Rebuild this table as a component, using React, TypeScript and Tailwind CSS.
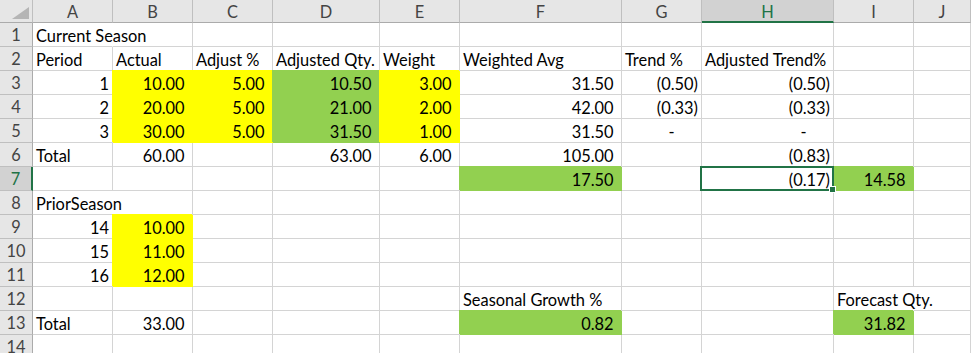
import React from "react";

type Fill = "y" | "g";
type Cell = {
  t?: string; // left-aligned text
  i?: string; // general-format integer, right aligned
  n?: string; // accounting-format number, right aligned
  dash?: boolean; // accounting zero
  fill?: Fill;
  spill?: boolean; // text runs into the empty neighbour
  sel?: boolean;
};

const COL_W = [
  "w-[80px]",
  "w-[80px]",
  "w-[80px]",
  "w-[107px]",
  "w-[80px]",
  "w-[162px]",
  "w-[80px]",
  "w-[132px]",
  "w-[80px]",
  "flex-1",
];

const LETTERS = ["A", "B", "C", "D", "E", "F", "G", "H", "I", "J"];

const E: Cell = {};

const ROWS: Cell[][] = [
  [{ t: "Current Season", spill: true }, E, E, E, E, E, E, E, E, E],
  [
    { t: "Period" },
    { t: "Actual" },
    { t: "Adjust %" },
    { t: "Adjusted Qty." },
    { t: "Weight" },
    { t: "Weighted Avg" },
    { t: "Trend %" },
    { t: "Adjusted Trend%" },
    E,
    E,
  ],
  [
    { i: "1" },
    { n: "10.00", fill: "y" },
    { n: "5.00", fill: "y" },
    { n: "10.50", fill: "g" },
    { n: "3.00", fill: "y" },
    { n: "31.50" },
    { n: "(0.50)" },
    { n: "(0.50)" },
    E,
    E,
  ],
  [
    { i: "2" },
    { n: "20.00", fill: "y" },
    { n: "5.00", fill: "y" },
    { n: "21.00", fill: "g" },
    { n: "2.00", fill: "y" },
    { n: "42.00" },
    { n: "(0.33)" },
    { n: "(0.33)" },
    E,
    E,
  ],
  [
    { i: "3" },
    { n: "30.00", fill: "y" },
    { n: "5.00", fill: "y" },
    { n: "31.50", fill: "g" },
    { n: "1.00", fill: "y" },
    { n: "31.50" },
    { dash: true },
    { dash: true },
    E,
    E,
  ],
  [
    { t: "Total" },
    { n: "60.00" },
    E,
    { n: "63.00" },
    { n: "6.00" },
    { n: "105.00" },
    E,
    { n: "(0.83)" },
    E,
    E,
  ],
  [
    E,
    E,
    E,
    E,
    E,
    { n: "17.50", fill: "g" },
    E,
    { n: "(0.17)", sel: true },
    { n: "14.58", fill: "g" },
    E,
  ],
  [{ t: "PriorSeason", spill: true }, E, E, E, E, E, E, E, E, E],
  [{ i: "14" }, { n: "10.00", fill: "y" }, E, E, E, E, E, E, E, E],
  [{ i: "15" }, { n: "11.00", fill: "y" }, E, E, E, E, E, E, E, E],
  [{ i: "16" }, { n: "12.00", fill: "y" }, E, E, E, E, E, E, E, E],
  [E, E, E, E, E, { t: "Seasonal Growth %" }, E, E, { t: "Forecast Qty.", spill: true }, E],
  [
    { t: "Total" },
    { n: "33.00" },
    E,
    E,
    E,
    { n: "0.82", fill: "g" },
    E,
    E,
    { n: "31.82", fill: "g" },
    E,
  ],
  [E, E, E, E, E, E, E, E, E, E],
];

function CellView({ c, col }: { c: Cell; col: number }) {
  let skin = "border-[#d4d4d4]";
  if (c.fill === "y") skin = "bg-[#ffff00] border-[#ffff00] shadow-[-1px_-1px_0_0_#ffff00]";
  else if (c.fill === "g") skin = "bg-[#92d050] border-[#92d050] shadow-[-1px_-1px_0_0_#92d050]";
  else if (c.spill) skin = "border-b-[#d4d4d4] border-r-transparent";

  const right = c.i !== undefined || c.n !== undefined || c.dash;

  let content: React.ReactNode = null;
  if (c.t) content = c.t;
  else if (c.i) content = c.i;
  else if (c.n) {
    content = c.n.startsWith("(") ? (
      c.n
    ) : (
      <>
        {c.n}
        <span className="invisible">)</span>
      </>
    );
  } else if (c.dash) {
    content = (
      <>
        -<span className="invisible">00)</span>
      </>
    );
  }

  return (
    <div
      className={`relative flex h-full shrink-0 items-end whitespace-nowrap border-r border-b px-[3px] pb-[1px] ${
        right ? "justify-end" : "justify-start"
      } ${COL_W[col]} ${skin}`}
    >
      {content}
      {c.sel && (
        <div className="pointer-events-none absolute -top-[1px] -left-[2px] -right-[1px] -bottom-[1px] z-10 border-2 border-[#217346]">
          <div className="absolute -right-[4px] -bottom-[4px] h-[7px] w-[7px] border border-white bg-[#217346]" />
        </div>
      )}
    </div>
  );
}

export default function App() {
  return (
    <div
      className="h-[353px] w-full overflow-hidden bg-white text-[16.4px] leading-[19px] text-black"
      style={{ fontFamily: "Lato, 'Open Sans', sans-serif" }}
    >
      {/* column headers */}
      <div className="flex h-[23px] text-[#444]">
        <div className="flex w-[33px] shrink-0 items-end justify-end border-r border-b border-r-[#bfbfbf] border-b-[#ababab] bg-[#e6e6e6] pr-[2px] pb-[2px]">
          <svg width="18" height="13" viewBox="0 0 18 13">
            <polygon points="17,0 17,12 0,12" fill="#b5b5b5" />
          </svg>
        </div>
        {LETTERS.map((l, i) =>
          l === "H" ? (
            <div
              key={l}
              className={`flex shrink-0 items-center justify-center border-r border-b-2 border-r-[#bfbfbf] border-b-[#217346] bg-[#d2d2d2] pt-[1px] text-[#217346] ${COL_W[i]}`}
            >
              {l}
            </div>
          ) : (
            <div
              key={l}
              className={`flex shrink-0 items-center justify-center border-r border-b border-r-[#bfbfbf] border-b-[#ababab] bg-[#e6e6e6] ${COL_W[i]}`}
            >
              {l}
            </div>
          )
        )}
      </div>

      {ROWS.map((row, r) => (
        <div key={r} className="flex h-[24px]">
          {r === 6 ? (
            <div className="flex w-[33px] shrink-0 items-center justify-center border-r-2 border-b border-r-[#217346] border-b-[#bfbfbf] bg-[#d2d2d2] text-[#217346]">
              {r + 1}
            </div>
          ) : (
            <div className="flex w-[33px] shrink-0 items-center justify-center border-r border-b border-r-[#ababab] border-b-[#bfbfbf] bg-[#e6e6e6] text-[#444]">
              {r + 1}
            </div>
          )}
          {row.map((c, i) => (
            <CellView key={i} c={c} col={i} />
          ))}
        </div>
      ))}
    </div>
  );
}
